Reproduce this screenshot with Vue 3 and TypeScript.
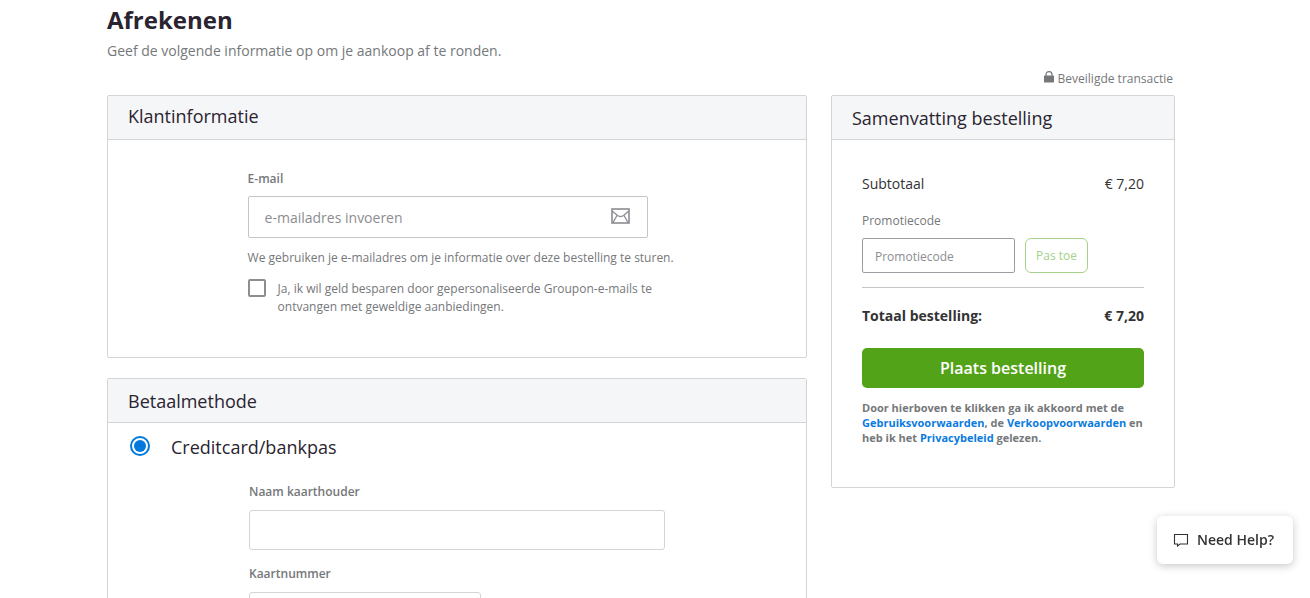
<script setup lang="ts">
import { ref } from 'vue'

const email = ref('')
const newsletter = ref(false)
const paymentMethod = ref('card')
const cardHolder = ref('')
const cardNumber = ref('')
const promoCode = ref('')
const total = '€ 7,20'
</script>

<template>
  <div class="app">
    <main class="page">
      <header class="intro">
        <h1>Afrekenen</h1>
        <p>Geef de volgende informatie op om je aankoop af te ronden.</p>
      </header>

      <p class="secure">
        <svg width="10" height="12" viewBox="0 0 10 12" aria-hidden="true">
          <path d="M2 5V3.4C2 1.6 3.3.6 5 .6s3 1 3 2.8V5" fill="none" stroke="#75787b" stroke-width="1.2" />
          <rect x="0" y="4.6" width="10" height="6.9" rx=".6" fill="#75787b" />
        </svg>
        <span>Beveiligde transactie</span>
      </p>

      <div class="columns">
        <div class="forms">
          <section class="card customer">
            <h2>Klantinformatie</h2>
            <div class="customer-body">
              <label class="field-label" for="email">E-mail</label>
              <div class="email-box">
                <input id="email" v-model="email" type="email" placeholder="e-mailadres invoeren" />
                <svg width="19" height="16" viewBox="0 0 19 16" fill="none" stroke="#8b8d91" aria-hidden="true">
                  <rect x="1" y="1" width="17" height="14" stroke-width="1.6" />
                  <path d="M1.2 3 6.500 7.500q3 2 6 0L17.800 3M2 14.500 6 7.500M17 14.500 13 7.500" stroke-width="1.300" />
                </svg>
              </div>
              <p class="hint">We gebruiken je e-mailadres om je informatie over deze bestelling te sturen.</p>
              <label class="check">
                <input v-model="newsletter" type="checkbox" />
                <span>Ja, ik wil geld besparen door gepersonaliseerde Groupon-e-mails te ontvangen met geweldige aanbiedingen.</span>
              </label>
            </div>
          </section>

          <section class="card">
            <h2>Betaalmethode</h2>
            <div class="payment-body">
              <label class="method">
                <input v-model="paymentMethod" type="radio" name="method" value="card" />
                <span>Creditcard/bankpas</span>
              </label>
              <div class="card-fields">
                <label class="field-label" for="holder">Naam kaarthouder</label>
                <input id="holder" v-model="cardHolder" class="text-field" type="text" />
                <label class="field-label" for="number">Kaartnummer</label>
                <input id="number" v-model="cardNumber" class="text-field short" type="text" />
              </div>
            </div>
          </section>
        </div>

        <aside class="card summary">
          <h2>Samenvatting bestelling</h2>
          <div class="summary-body">
            <div class="row">
              <span>Subtotaal</span>
              <span>{{ total }}</span>
            </div>
            <label class="promo-label" for="promo">Promotiecode</label>
            <div class="promo">
              <input id="promo" v-model="promoCode" type="text" placeholder="Promotiecode" />
              <button type="button">Pas toe</button>
            </div>
            <div class="row total">
              <span>Totaal bestelling:</span>
              <span>{{ total }}</span>
            </div>
            <button class="place" type="button">Plaats bestelling</button>
            <p class="legal">
              Door hierboven te klikken ga ik akkoord met de
              <a href="#">Gebruiksvoorwaarden</a>, de <a href="#">Verkoopvoorwaarden</a> en heb ik het
              <a href="#">Privacybeleid</a> gelezen.
            </p>
          </div>
        </aside>
      </div>
    </main>

    <button class="help" type="button">
      <svg width="16" height="14" viewBox="0 0 16 14" fill="none" stroke="#333" stroke-width="1.1" aria-hidden="true">
        <path d="M1.500 1.500h13v9.500H7L4.500 13V11h-3z" />
      </svg>
      <span>Need Help?</span>
    </button>
  </div>
</template>

<style>
body {
  margin: 0;
  background: #fff;
}
</style>

<style scoped>
.app {
  height: 100vh;
  overflow: hidden;
  font-family: "Open Sans", "Noto Sans", sans-serif;
  font-size: 14px;
  color: #333;
}
.app * {
  box-sizing: border-box;
}
h1,
h2,
p {
  margin: 0;
}
input,
button {
  font-family: inherit;
  margin: 0;
}
input::placeholder {
  color: #8b8d91;
  opacity: 1;
}
.page {
  max-width: 1096px;
  margin: 0 auto;
  padding-right: 28px;
  box-sizing: border-box;
}
h1 {
  padding-top: 4px;
  font-size: 24px;
  line-height: 32px;
  font-weight: 700;
  color: #2a2430;
}
.intro p {
  padding-top: 5px;
  line-height: 20px;
  color: #75787b;
}
.secure {
  display: flex;
  justify-content: flex-end;
  align-items: center;
  gap: 4px;
  padding: 9px 2px 8px 0;
  font-size: 12px;
  line-height: 17px;
  color: #75787b;
}
.secure svg {
  margin-bottom: 3px;
}
.columns {
  display: flex;
  align-items: flex-start;
  gap: 24px;
}
.forms {
  flex: 1;
  display: flex;
  flex-direction: column;
  gap: 20px;
}
.card {
  border: 1px solid #d3d4d8;
  border-radius: 2px;
  background: #fff;
}
h2 {
  padding: 2px 20px 0;
  border-bottom: 1px solid #d3d4d8;
  background: #f5f6f8;
  font-size: 18px;
  line-height: 41px;
  font-weight: 400;
  color: #2a2430;
}
.customer h2 {
  padding: 0 20px 2px;
}
.customer-body {
  width: 80%;
  padding: 30px 100px 41px 0;
  margin-left: 20%;
}
.field-label {
  display: block;
  font-size: 12px;
  line-height: 18px;
  font-weight: 600;
  color: #75787b;
}
.email-box {
  display: flex;
  align-items: center;
  max-width: 400px;
  height: 42px;
  margin-top: 8px;
  padding: 0 17px 0 16px;
  border: 1px solid #c4c5c8;
  border-radius: 2px;
}
.email-box input {
  flex: 1;
  min-width: 0;
  padding: 0;
  border: 0;
  outline: 0;
  font-size: 14px;
}
.email-box svg {
  margin-bottom: 2px;
}
.hint {
  margin-top: 11px;
  font-size: 12px;
  line-height: 18px;
  color: #75787b;
}
.check {
  display: flex;
  align-items: flex-start;
  gap: 12px;
  margin-top: 12px;
  font-size: 12px;
  line-height: 18px;
  color: #75787b;
}
.check input {
  appearance: none;
  flex: none;
  width: 18px;
  height: 18px;
  border: 2px solid #8b8d91;
  border-radius: 2px;
}
.check input:checked {
  background: #0078dc;
}
.check span {
  max-width: 390px;
  padding-top: 1px;
}
.payment-body {
  padding: 10px 22px 30px;
}
.method {
  display: flex;
  align-items: center;
  gap: 21px;
  font-size: 18px;
  line-height: 28px;
  font-weight: 400;
  color: #2a2430;
}
.method input {
  appearance: none;
  width: 20px;
  height: 20px;
  margin-bottom: 2px;
  border: 2px solid #0078dc;
  border-radius: 50%;
}
.method input:checked {
  padding: 2px;
  background: #0078dc content-box;
}
.card-fields {
  margin: 22px 0 0 119px;
}
.text-field {
  display: block;
  width: 416px;
  max-width: 100%;
  height: 40px;
  margin: 9px 0 15px;
  padding: 0 12px;
  border: 1px solid #d3d4d8;
  border-radius: 3px;
  font-size: 14px;
}
.text-field.short {
  width: 232px;
}
.summary {
  width: 344px;
  flex: none;
}
.summary-body {
  padding: 34px 30px 42px;
}
.row {
  display: flex;
  justify-content: space-between;
  line-height: 20px;
}
.promo-label {
  display: block;
  margin-top: 18px;
  font-size: 12px;
  line-height: 18px;
  color: #75787b;
}
.promo {
  display: flex;
  gap: 10px;
  margin-top: 8px;
  padding-bottom: 14px;
  border-bottom: 1px solid #c4c5c8;
}
.promo input {
  width: 153px;
  height: 35px;
  padding: 2px 12px 0;
  border: 1px solid #9a9da1;
  border-radius: 2px;
  font-size: 12px;
}
.promo button {
  width: 63px;
  height: 35px;
  padding: 0;
  border: 1px solid #a5d188;
  border-radius: 6px;
  background: #fff;
  font-size: 12px;
  color: #a5d188;
}
.total {
  margin-top: 18px;
  font-weight: 700;
}
.place {
  display: block;
  width: 100%;
  height: 40px;
  margin-top: 22px;
  padding: 0;
  border: 0;
  border-radius: 5px;
  background: #53a318;
  font-size: 16px;
  font-weight: 600;
  color: #fff;
}
.legal {
  margin-top: 12px;
  font-size: 11px;
  line-height: 15px;
  font-weight: 700;
  color: #75787b;
}
.legal a {
  color: #0a7be0;
  text-decoration: none;
}
.help {
  position: fixed;
  right: 17px;
  bottom: 34px;
  display: flex;
  align-items: center;
  gap: 8px;
  height: 48px;
  padding: 0 19px 2px 16px;
  border: 0;
  border-radius: 6px;
  background: #fff;
  box-shadow: 0 2px 8px rgba(0, 0, 0, 0.22);
  font-size: 14px;
  font-weight: 600;
  color: #333;
}
.help svg {
  margin-top: 2px;
}
</style>
